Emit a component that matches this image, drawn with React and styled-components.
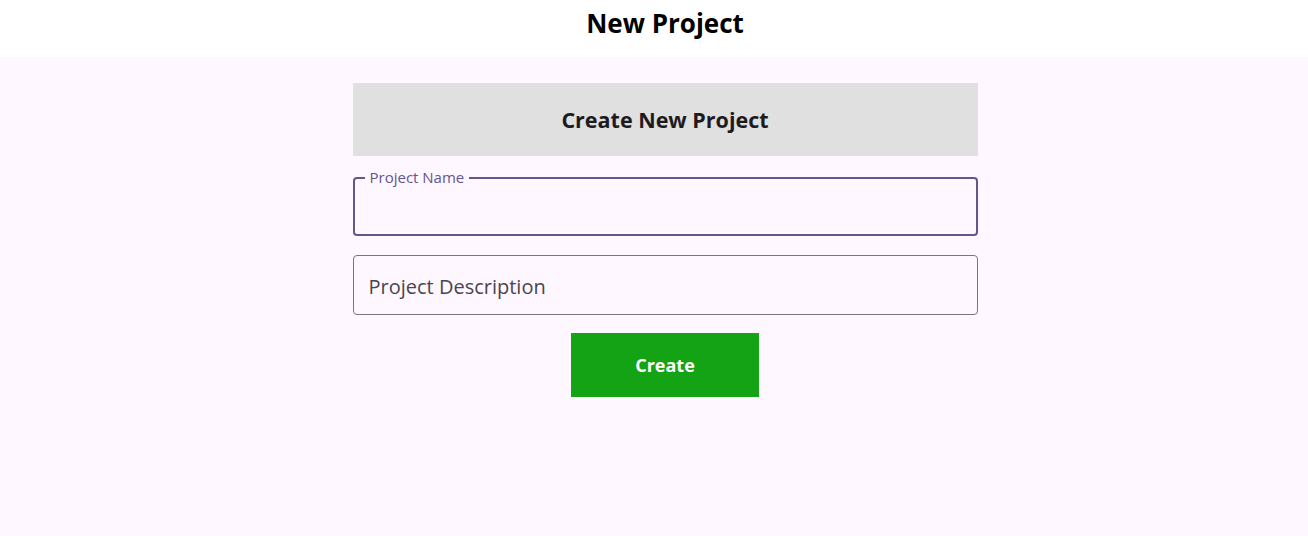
import React from 'react'
import styled, { createGlobalStyle } from 'styled-components'

const COLORS = {
  surface: '#fef7ff',
  primary: '#65558f',
  outline: '#79747e',
  onSurface: '#1d1b20',
  muted: '#49454f',
  card: '#e0e0e0',
  green: '#14a314'
}

const Global = createGlobalStyle`
  html, body {
    margin: 0;
    padding: 0;
    background: ${COLORS.surface};
    font-family: "Open Sans", "Noto Sans", sans-serif;
  }
`

const Page = styled.div`
  display: flex;
  flex-direction: column;
  min-height: 536px;
`

const Header = styled.header`
  box-sizing: border-box;
  height: 57px;
  background: #fff;
  display: flex;
  align-items: center;
  justify-content: center;
  padding: 0 0 12px 22px;
  font-size: 26px;
  font-weight: 700;
  color: #000;
`

const Main = styled.main`
  flex: 1;
  background: ${COLORS.surface};
  display: flex;
  justify-content: center;
  padding: 26px 0 0 22px;
`

const Form = styled.div`
  width: 625px;
  display: flex;
  flex-direction: column;
  align-items: center;
`

const TitleCard = styled.div`
  width: 100%;
  height: 73px;
  background: ${COLORS.card};
  display: flex;
  align-items: center;
  justify-content: center;
  font-size: 21.5px;
  font-weight: 700;
  color: ${COLORS.onSurface};
`

const Field = styled.div`
  position: relative;
  box-sizing: border-box;
  width: 100%;
  height: ${p => (p.$focused ? '59px' : '60px')};
  margin-top: ${p => p.$top}px;
  border: ${p => (p.$focused ? `2px solid ${COLORS.primary}` : `1px solid ${COLORS.outline}`)};
  border-radius: 4px;
  display: flex;
  align-items: center;
  padding: 0 15px;
`

const FloatLabel = styled.span`
  position: absolute;
  left: 10px;
  top: -11px;
  padding: 0 5px;
  background: ${COLORS.surface};
  font-size: 15px;
  line-height: 19px;
  color: ${COLORS.primary};
`

const Placeholder = styled.span`
  font-size: 20px;
  color: ${COLORS.muted};
  padding-top: 2px;
`

const Button = styled.button`
  margin-top: 18px;
  width: 188px;
  height: 64px;
  border: none;
  background: ${COLORS.green};
  color: #fff;
  font-family: inherit;
  font-size: 18px;
  font-weight: 700;
  cursor: pointer;
`

export default function App () {
  return (
    <Page>
      <Global />
      <Header>New Project</Header>
      <Main>
        <Form>
          <TitleCard>Create New Project</TitleCard>
          <Field $focused $top={21}>
            <FloatLabel>Project Name</FloatLabel>
          </Field>
          <Field $top={19}>
            <Placeholder>Project Description</Placeholder>
          </Field>
          <Button>Create</Button>
        </Form>
      </Main>
    </Page>
  )
}
